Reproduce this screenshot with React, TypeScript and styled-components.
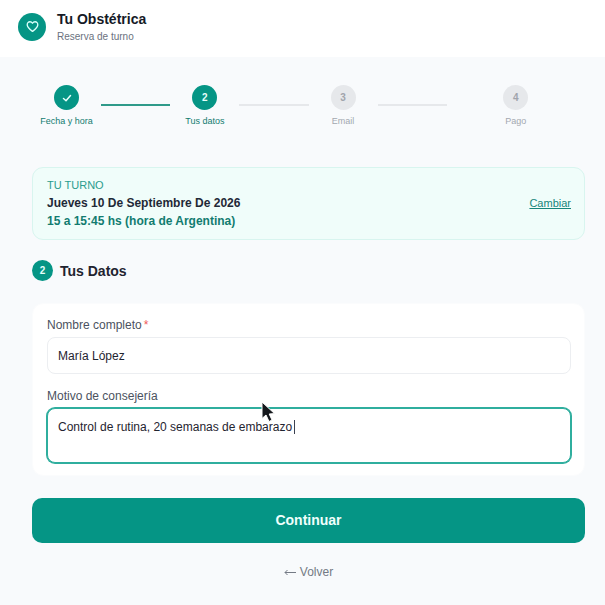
import React, { useState } from "react";
import styled, { createGlobalStyle } from "styled-components";

const teal = "#059585";
const tealText = "#127c70";

const GlobalStyle = createGlobalStyle`
  *, *::before, *::after { box-sizing: border-box; }
  body {
    margin: 0;
    background: #f8fafc;
    color: #1f2430;
    font-family: "Liberation Sans", Arial, sans-serif;
  }
  button, input, textarea { font: inherit; color: inherit; }
`;

const Page = styled.div`
  min-height: 100vh;
`;

const Header = styled.header`
  display: flex;
  align-items: center;
  gap: 11px;
  padding: 9px 18px 13px;
  background: #ffffff;
`;

const Logo = styled.div`
  display: grid;
  place-items: center;
  width: 28px;
  height: 28px;
  border-radius: 50%;
  background: ${teal};
  color: #d9fffa;
`;

const Brand = styled.h1`
  margin: 0;
  font-size: 14px;
  line-height: 20px;
  font-weight: 700;
  color: #151a26;
`;

const Tagline = styled.p`
  margin: 0;
  font-size: 10px;
  line-height: 15px;
  color: #6b7280;
`;

const Main = styled.main`
  padding: 28px 20px 20px 32px;
`;

const Steps = styled.ol`
  display: flex;
  margin: 0;
  padding: 0;
  list-style: none;
`;

const Step = styled.li`
  display: flex;
  flex: 1;
  align-items: center;
`;

const StepMark = styled.div<{ $active: boolean }>`
  display: flex;
  flex: 1 0 0;
  flex-direction: column;
  align-items: center;
  gap: 5px;
  font-size: 9px;
  line-height: 12px;
  white-space: nowrap;
  color: ${(p) => (p.$active ? tealText : "#a3a8b0")};
`;

const Circle = styled.span<{ $active?: boolean; $size: number }>`
  display: grid;
  place-items: center;
  width: ${(p) => p.$size}px;
  height: ${(p) => p.$size}px;
  border-radius: 50%;
  font-size: 10px;
  line-height: 12px;
  font-weight: 700;
  background: ${(p) => (p.$active ? teal : "#e6e8eb")};
  color: ${(p) => (p.$active ? "#e6fffb" : "#a0a4ac")};
`;

const Connector = styled.span<{ $done: boolean }>`
  flex: 1 0 0;
  height: 2px;
  margin-bottom: 2px;
  background: ${(p) => (p.$done ? "#2f9a8a" : "#e6e8eb")};
`;

const Appointment = styled.section`
  display: flex;
  align-items: center;
  justify-content: space-between;
  margin-top: 40px;
  padding: 8px 13px 9px 14px;
  border: 1px solid #d8f5ef;
  border-radius: 11px;
  background: #f0fdfa;
`;

const Overline = styled.p`
  margin: 0;
  font-size: 11px;
  line-height: 18px;
  color: #2b9c8e;
`;

const Detail = styled.p<{ $accent?: boolean }>`
  margin: 0;
  font-size: 12px;
  line-height: 18px;
  font-weight: 700;
  color: ${(p) => (p.$accent ? tealText : "#1f2937")};
`;

const ChangeLink = styled.a`
  font-size: 11px;
  line-height: 16px;
  color: #16857a;
  text-decoration: underline;
`;

const SectionHeading = styled.h2`
  display: flex;
  align-items: center;
  gap: 7px;
  margin: 20px 0 22px;
  font-size: 14px;
  line-height: 20px;
  font-weight: 700;
  color: #1f2430;
`;

const Card = styled.div`
  display: flex;
  flex-direction: column;
  gap: 14px;
  padding: 13px 13px 12px 14px;
  border: 1px solid #fbfcfd;
  border-radius: 11px;
  background: #ffffff;
`;

const Field = styled.div`
  display: flex;
  flex-direction: column;
  gap: 4px;
`;

const Label = styled.label`
  font-size: 12px;
  line-height: 16px;
  color: #4b5260;
`;

const Required = styled.span`
  margin-left: 2px;
  color: #ef5b5b;
`;

const TextInput = styled.input`
  width: 100%;
  height: 37px;
  padding: 0 10px;
  border: 1px solid #eceef1;
  border-radius: 8px;
  outline: none;
  background: #ffffff;
  font-size: 12px;
  line-height: 18px;
`;

const AreaWrap = styled.div`
  position: relative;
  display: flex;
`;

const TextArea = styled.textarea`
  width: 100%;
  height: 55px;
  padding: 9px 10px;
  border: 1px solid #2fae9e;
  border-radius: 8px;
  outline: none;
  box-shadow: 0 0 0 1px #2fae9e;
  background: #ffffff;
  font-size: 12px;
  line-height: 18px;
  resize: none;
  caret-color: transparent;
`;

const Caret = styled.span`
  position: absolute;
  left: 247px;
  top: 12px;
  width: 1px;
  height: 14px;
  background: #3b4150;
`;

const Pointer = styled.svg`
  position: absolute;
  left: 214px;
  top: -7px;
  pointer-events: none;
`;

const Submit = styled.button`
  display: block;
  width: 100%;
  height: 45px;
  margin-top: 22px;
  padding: 0 0 2px;
  border: 0;
  border-radius: 10px;
  background: ${teal};
  color: #f0fffc;
  font-size: 14px;
  font-weight: 700;
  cursor: pointer;
`;

const Back = styled.button`
  display: flex;
  align-items: center;
  gap: 4px;
  margin: 20px auto 0;
  padding: 0;
  border: 0;
  background: none;
  color: #747a85;
  font-size: 12px;
  line-height: 18px;
  cursor: pointer;
`;

const HeartIcon = () => (
  <svg width="13" height="13" viewBox="0 0 24 24" fill="none" stroke="currentColor" strokeWidth="2.500" strokeLinejoin="round" aria-hidden="true">
    <path d="M12 21 C10.500 19.800 3 14.500 2.300 9.500 C1.700 5.500 4.500 3.200 7.300 3.200 C9.500 3.200 11 4.400 12 6 C13 4.400 14.500 3.200 16.700 3.200 C19.500 3.200 22.300 5.500 21.700 9.500 C21 14.500 13.500 19.800 12 21 Z" />
  </svg>
);

const CheckIcon = () => (
  <svg width="10" height="10" viewBox="0 0 10 10" fill="none" stroke="currentColor" strokeWidth="1.500" strokeLinecap="round" strokeLinejoin="round" aria-label="Completado">
    <path d="M1.500 5.500 L4 7.700 L8.500 2.500" />
  </svg>
);

const ArrowIcon = () => (
  <svg width="12" height="8" viewBox="0 0 12 8" fill="none" stroke="currentColor" strokeWidth="1" aria-hidden="true">
    <path d="M12 4.500 H1 M3.500 2 L1 4.500 L3.500 7" />
  </svg>
);

const steps = ["Fecha y hora", "Tus datos", "Email", "Pago"];
const current = 1;

export default function App() {
  const [name, setName] = useState("María López");
  const [reason, setReason] = useState("Control de rutina, 20 semanas de embarazo");

  return (
    <Page>
      <GlobalStyle />
      <Header>
        <Logo>
          <HeartIcon />
        </Logo>
        <div>
          <Brand>Tu Obstétrica</Brand>
          <Tagline>Reserva de turno</Tagline>
        </div>
      </Header>
      <Main>
        <Steps>
          {steps.map((label, i) => (
            <Step key={label}>
              <StepMark $active={i <= current}>
                <Circle $active={i <= current} $size={25}>
                  {i < current ? <CheckIcon /> : i + 1}
                </Circle>
                {label}
              </StepMark>
              {i < steps.length - 1 && <Connector $done={i < current} />}
            </Step>
          ))}
        </Steps>

        <Appointment>
          <div>
            <Overline>TU TURNO</Overline>
            <Detail>Jueves 10 De Septiembre De 2026</Detail>
            <Detail $accent>15 a 15:45 hs (hora de Argentina)</Detail>
          </div>
          <ChangeLink href="#cambiar">Cambiar</ChangeLink>
        </Appointment>

        <SectionHeading>
          <Circle $active $size={21}>
            2
          </Circle>
          Tus Datos
        </SectionHeading>

        <form onSubmit={(e) => e.preventDefault()}>
          <Card>
            <Field>
              <Label htmlFor="name">
                Nombre completo<Required>*</Required>
              </Label>
              <TextInput id="name" required value={name} onChange={(e) => setName(e.target.value)} />
            </Field>
            <Field>
              <Label htmlFor="reason">Motivo de consejería</Label>
              <AreaWrap>
                <TextArea id="reason" value={reason} onChange={(e) => setReason(e.target.value)} />
                <Caret />
                <Pointer width="16" height="22" viewBox="0 0 16 22" aria-hidden="true">
                  <path d="M1 1 L1 17.500 L5 14 L8 20.500 L11 19 L8.200 13 L13.500 12.600 Z" fill="#15181c" stroke="#ffffff" strokeWidth="1" />
                </Pointer>
              </AreaWrap>
            </Field>
          </Card>
          <Submit type="submit">Continuar</Submit>
          <Back type="button">
            <ArrowIcon />
            Volver
          </Back>
        </form>
      </Main>
    </Page>
  );
}
